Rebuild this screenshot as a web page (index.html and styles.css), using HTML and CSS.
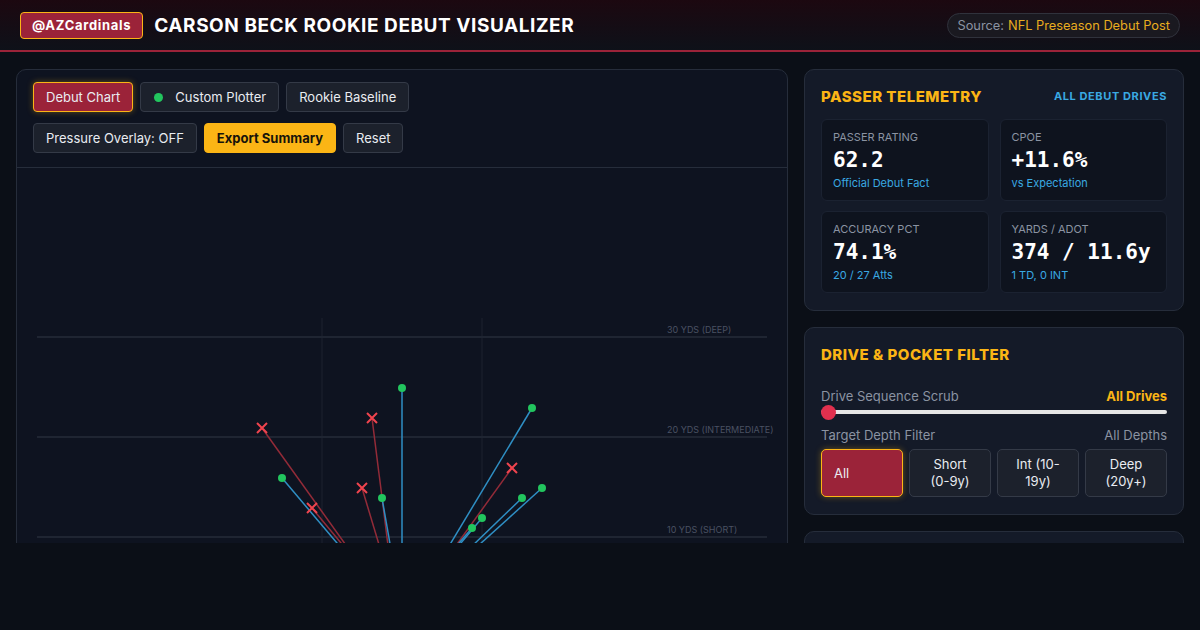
FILE: index.html
```html
<!DOCTYPE html>
<html lang="en">
<head>
  <meta charset="UTF-8" />
  <meta name="viewport" content="width=device-width, initial-scale=1" />
  <title>Carson Beck Rookie Debut Visualizer</title>
  <link rel="stylesheet" href="styles.css">
</head>
<body>

  <!-- Top Bar -->
  <header class="topbar">
    <div class="brand">
      <span class="handle">@AZCardinals</span>
      <h1>CARSON BECK ROOKIE DEBUT VISUALIZER</h1>
    </div>
    <div class="source">Source: <span>NFL Preseason Debut Post</span></div>
  </header>

  <main class="layout">

    <!-- Chart Panel -->
    <section class="chart-panel">
      <div class="toolbar">
        <div class="btn-row">
          <button class="btn btn-active">Debut Chart</button>
          <button class="btn"><i class="dot"></i>Custom Plotter</button>
          <button class="btn">Rookie Baseline</button>
        </div>
        <div class="btn-row">
          <button class="btn">Pressure Overlay: OFF</button>
          <button class="btn btn-gold">Export Summary</button>
          <button class="btn">Reset</button>
        </div>
      </div>

      <div class="field">
        <svg width="770" height="440" viewBox="0 0 770 440">
          <!-- grid -->
          <g class="grid-v">
            <line x1="305" y1="150" x2="305" y2="440" />
            <line x1="465" y1="150" x2="465" y2="440" />
          </g>
          <g class="grid-h">
            <line x1="20" y1="169" x2="750" y2="169" />
            <line x1="20" y1="269" x2="750" y2="269" />
            <line x1="20" y1="369" x2="750" y2="369" />
          </g>
          <g class="yard-label">
            <text x="650" y="165">30 YDS (DEEP)</text>
            <text x="650" y="265">20 YDS (INTERMEDIATE)</text>
            <text x="650" y="365">10 YDS (SHORT)</text>
          </g>

          <!-- incompletions -->
          <g class="miss-line">
            <line x1="245" y1="260" x2="369" y2="433" />
            <line x1="295" y1="340" x2="372" y2="433" />
            <line x1="355" y1="250" x2="378" y2="433" />
            <line x1="345" y1="320" x2="379" y2="433" />
            <line x1="495" y1="300" x2="399" y2="433" />
          </g>

          <!-- completions -->
          <g class="hit-line">
            <line x1="385" y1="220" x2="385" y2="433" />
            <line x1="265" y1="310" x2="369" y2="433" />
            <line x1="365" y1="330" x2="383" y2="433" />
            <line x1="515" y1="240" x2="399" y2="433" />
            <line x1="525" y1="320" x2="400" y2="433" />
            <line x1="505" y1="330" x2="398" y2="433" />
            <line x1="465" y1="350" x2="395" y2="433" />
            <line x1="455" y1="360" x2="392" y2="433" />
          </g>

          <g class="hit">
            <circle cx="385" cy="220" r="4" />
            <circle cx="265" cy="310" r="4" />
            <circle cx="365" cy="330" r="4" />
            <circle cx="515" cy="240" r="4" />
            <circle cx="525" cy="320" r="4" />
            <circle cx="505" cy="330" r="4" />
            <circle cx="465" cy="350" r="4" />
            <circle cx="455" cy="360" r="4" />
          </g>

          <g class="miss">
            <path d="M240 255 L250 265 M250 255 L240 265" />
            <path d="M290 335 L300 345 M300 335 L290 345" />
            <path d="M350 245 L360 255 M360 245 L350 255" />
            <path d="M340 315 L350 325 M350 315 L340 325" />
            <path d="M490 295 L500 305 M500 295 L490 305" />
          </g>
        </svg>
      </div>
    </section>

    <!-- Side Column -->
    <aside class="side">
      <div class="card">
        <div class="card-head">
          <h2>PASSER TELEMETRY</h2>
          <span class="tag">ALL DEBUT DRIVES</span>
        </div>
        <div class="metrics">
          <div class="metric">
            <div class="m-label">PASSER RATING</div>
            <div class="m-value">62.2</div>
            <div class="m-sub">Official Debut Fact</div>
          </div>
          <div class="metric">
            <div class="m-label">CPOE</div>
            <div class="m-value">+11.6%</div>
            <div class="m-sub">vs Expectation</div>
          </div>
          <div class="metric">
            <div class="m-label">ACCURACY PCT</div>
            <div class="m-value">74.1%</div>
            <div class="m-sub">20 / 27 Atts</div>
          </div>
          <div class="metric">
            <div class="m-label">YARDS / ADOT</div>
            <div class="m-value">374 / 11.6y</div>
            <div class="m-sub">1 TD, 0 INT</div>
          </div>
        </div>
      </div>

      <div class="card">
        <div class="card-head">
          <h2>DRIVE &amp; POCKET FILTER</h2>
        </div>
        <div class="filter-row first">
          <span>Drive Sequence Scrub</span>
          <span class="gold">All Drives</span>
        </div>
        <div class="slider">
          <div class="track"></div>
          <div class="thumb"></div>
        </div>
        <div class="filter-row">
          <span>Target Depth Filter</span>
          <span>All Depths</span>
        </div>
        <div class="depths">
          <button class="depth depth-active">All</button>
          <button class="depth">Short<br>(0-9y)</button>
          <button class="depth">Int (10-<br>19y)</button>
          <button class="depth">Deep<br>(20y+)</button>
        </div>
      </div>

      <div class="card card-tall"></div>
    </aside>

  </main>

</body>
</html>
```

FILE: styles.css
```css
/* Reset */
* {
  margin: 0;
  padding: 0;
  box-sizing: border-box;
}

:root {
  --bg: #0b0f17;
  --panel: #0e1320;
  --card: #141a28;
  --box: #0e131e;
  --line: #262d3b;
  --crimson: #9b2339;
  --gold: #fbb515;
  --sky: #3aa9e2;
  --muted: #8b93a2;
}

html, body {
  height: 100%;
  background: var(--bg);
  color: #fff;
  font-family: 'Inter', 'Liberation Sans', sans-serif;
  overflow: hidden;
}

/* Top Bar */
.topbar {
  height: 52px;
  display: flex;
  align-items: center;
  justify-content: space-between;
  padding: 0 20px;
  background: linear-gradient(180deg, #1c0810 0%, #0e1119 100%);
  border-bottom: 2px solid var(--crimson);
}

.brand {
  display: flex;
  align-items: center;
  gap: 11px;
}

.handle {
  display: inline-flex;
  align-items: center;
  height: 27px;
  padding: 0 11px;
  background: var(--crimson);
  border: 1px solid var(--gold);
  border-radius: 4px;
  font-size: 13px;
  font-weight: 700;
  letter-spacing: 0.7px;
}

.brand h1 {
  font-size: 19px;
  font-weight: 700;
  letter-spacing: 0.55px;
}

.source {
  height: 25px;
  display: flex;
  align-items: center;
  gap: 4px;
  padding: 0 9px;
  border: 1px solid #30323c;
  background: #1a1920;
  border-radius: 13px;
  font-size: 12.8px;
  color: var(--muted);
}

.source span {
  color: #e9ad1f;
}

/* Layout */
.layout {
  height: 491px;
  overflow: hidden;
  display: grid;
  grid-template-columns: 1fr 380px;
  gap: 16px;
  padding: 17px 16px 0;
  align-items: start;
}

/* Chart Panel */
.chart-panel {
  background: var(--panel);
  border: 1px solid var(--line);
  border-radius: 10px;
  overflow: hidden;
}

.toolbar {
  padding: 12px 16px 14px;
  display: flex;
  flex-direction: column;
  gap: 11px;
  border-bottom: 1px solid var(--line);
}

.btn-row {
  display: flex;
  gap: 7px;
}

.btn {
  height: 30px;
  padding: 0 12px;
  display: inline-flex;
  align-items: center;
  background: #1c212c;
  border: 1px solid #343a47;
  border-radius: 4px;
  color: #e9ecf1;
  font-family: inherit;
  font-size: 13px;
}

.btn-active {
  background: var(--crimson);
  border-color: var(--gold);
  box-shadow: 0 0 6px rgba(251, 181, 21, 0.35);
}

.btn-gold {
  background: var(--gold);
  border-color: var(--gold);
  color: #17130a;
  font-weight: 700;
}

.dot {
  width: 9px;
  height: 9px;
  border-radius: 50%;
  background: #22c55e;
  margin: 0 12px 0 1px;
}

.field svg {
  display: block;
}

.grid-h line {
  stroke: #1f2532;
  stroke-width: 2;
}

.grid-v line {
  stroke: #181e2a;
  stroke-width: 1.5;
}

.yard-label text {
  fill: #4a5162;
  font-size: 9px;
  font-family: 'Inter', sans-serif;
}

.hit-line line {
  stroke: #2f8fc4;
  stroke-width: 1.5;
}

.miss-line line {
  stroke: #932b38;
  stroke-width: 1.5;
}

.hit circle {
  fill: #22c55e;
}

.miss path {
  stroke: #ef444e;
  stroke-width: 2;
  fill: none;
}

/* Side Cards */
.side {
  display: flex;
  flex-direction: column;
  gap: 16px;
}

.card {
  background: var(--card);
  border: 1px solid var(--line);
  border-radius: 10px;
  padding: 16px 16px 17px;
}

.card-tall {
  height: 200px;
}

.card-head {
  display: flex;
  align-items: center;
  justify-content: space-between;
  height: 20px;
  margin-bottom: 13px;
}

.card-head h2 {
  color: var(--gold);
  font-size: 15px;
  font-weight: 800;
  letter-spacing: 0.5px;
}

.tag {
  color: var(--sky);
  font-size: 11px;
  font-weight: 700;
  letter-spacing: 0.6px;
}

.metrics {
  display: grid;
  grid-template-columns: 1fr 1fr;
  gap: 10px 11px;
}

.metric {
  background: var(--box);
  border: 1px solid #1b2231;
  border-radius: 6px;
  padding: 10px 10px 10px 11px;
  height: 82px;
}

.m-label {
  font-size: 11px;
  line-height: 14px;
  color: var(--muted);
}

.m-value {
  margin-top: 3px;
  font-family: 'DejaVu Sans Mono', monospace;
  font-size: 21px;
  font-weight: 700;
  line-height: 26px;
}

.m-sub {
  margin-top: 3px;
  font-size: 11px;
  line-height: 14px;
  color: var(--sky);
}

/* Filter */
.filter-row {
  display: flex;
  justify-content: space-between;
  font-size: 13px;
  line-height: 18px;
  color: var(--muted);
}

.filter-row.first {
  margin-top: 23px;
}

.gold {
  color: var(--gold);
  font-weight: 700;
}

.slider {
  position: relative;
  height: 14px;
  margin: 0 0 7px;
  display: flex;
  align-items: center;
}

.track {
  width: 100%;
  height: 4px;
  background: #e6e6e6;
  border-radius: 2px;
}

.thumb {
  position: absolute;
  left: 0;
  top: 0;
  width: 15px;
  height: 15px;
  border-radius: 50%;
  background: #e1304e;
}

.depths {
  margin-top: 5px;
  display: grid;
  grid-template-columns: repeat(4, 1fr);
  gap: 6px;
}

.depth {
  height: 48px;
  background: #1c212c;
  border: 1px solid #343a47;
  border-radius: 5px;
  color: #e9ecf1;
  font-family: inherit;
  font-size: 13px;
  line-height: 17px;
}

.depth-active {
  background: var(--crimson);
  border-color: var(--gold);
  text-align: left;
  padding-left: 12px;
  box-shadow: 0 0 6px rgba(251, 181, 21, 0.35);
}
```
